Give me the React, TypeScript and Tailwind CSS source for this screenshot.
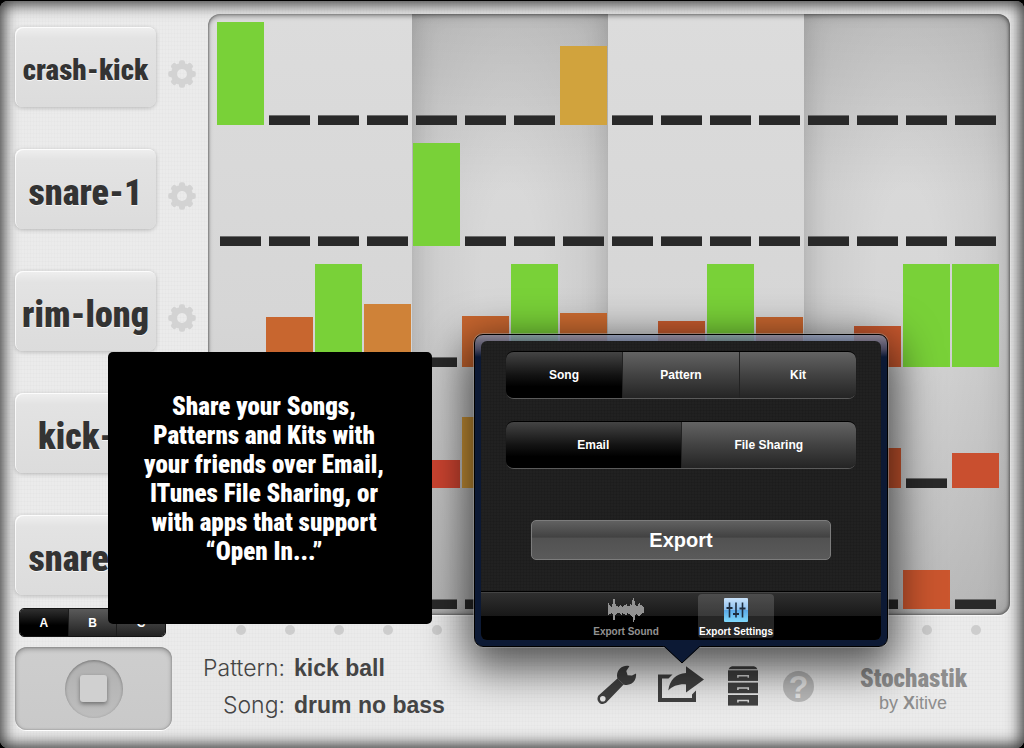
import React from "react";

type Cell = { level: number; color: string } | null;

const G = "#79d138";
const c = (level: number, color: string): Cell => ({ level, color });

const rows: Cell[][] = [
  [c(100, G), null, null, null, null, null, null, c(77, "#d1a33d"), null, null, null, null, null, null, null, null],
  [null, null, null, null, c(100, G), null, null, null, null, null, null, null, null, null, null, null],
  [null, c(49, "#c8662f"), c(100, G), c(61, "#cf8238"), null, c(50, "#c8662f"), c(100, G), c(52, "#cc6b30"), null, c(45, "#c85c2e"), c(100, G), c(49, "#c8662f"), null, c(40, "#c8582e"), c(100, G), c(100, G)],
  [null, null, null, null, c(27, "#cd4430"), c(69, "#cf9638"), null, null, null, null, null, null, null, c(39, "#c8552e"), null, c(34, "#c94f2f")],
  [null, null, null, null, null, null, null, null, null, null, null, null, null, null, c(38, "#cb562e"), null],
];

const tracks = [
  { name: "crash-kick", size: "text-[29px]" },
  { name: "snare-1", size: "text-[36px]" },
  { name: "rim-long", size: "text-[36px]" },
  { name: "kick-1", size: "text-[36px]" },
  { name: "snare-2", size: "text-[36px]" },
];

const SHADE =
  "bg-[linear-gradient(rgba(0,0,0,0.1),transparent_30%),radial-gradient(ellipse_at_50%_45%,rgba(0,0,0,0)_20%,rgba(0,0,0,0.1)_100%)] shadow-[inset_12px_0_28px_-12px_rgba(0,0,0,0.16),inset_-12px_0_28px_-12px_rgba(0,0,0,0.16)]";

const bands = [
  { start: 0, pad: "pl-[9px] pr-px", shade: "" },
  { start: 4, pad: "px-px", shade: SHADE },
  { start: 8, pad: "px-px", shade: "" },
  { start: 12, pad: "pl-px pr-[11px]", shade: SHADE },
];

const COND = "font-['Roboto_Condensed','Liberation_Sans_Narrow','Liberation_Sans',sans-serif] font-black";

function Gear() {
  return (
    <svg viewBox="-14 -14 28 28" className="h-7 w-7 fill-[#d3d3d3]">
      {[0, 45, 90, 135, 180, 225, 270, 315].map((a) => (
        <rect key={a} x="-3" y="-13.8" width="6" height="7" rx="2" transform={`rotate(${a})`} />
      ))}
      <path fillRule="evenodd" d="M0-11A11 11 0 1 1 0 11A11 11 0 1 1 0-11ZM0-5A5 5 0 1 0 0 5A5 5 0 1 0 0-5Z" />
    </svg>
  );
}

function Wrench() {
  return (
    <svg viewBox="0 0 40 40" className="h-10 w-10 fill-[#414141]">
      <path
        fillRule="evenodd"
        d="M32.4 1.2 29.3 6 30.6 10.2 35 10.6 39 8.4C39.6 13 37.6 17 34.2 18.8 31.6 20.2 28.8 20.2 26.6 19.4L10 36.8C7.8 39.4 4 39.6 2 37.4-.2 35.2 0 31.8 2.4 29.8L20.4 13.4C19.4 9.8 20.4 6 23 3.6 25.6 1 29.2.4 32.4 1.2ZM5.8 31A2.8 2.8 0 1 0 5.8 36.6 2.8 2.8 0 1 0 5.8 31Z"
      />
      <path d="M20.200 13.200 26.800 19.700" stroke="#777" strokeWidth=".6" />
    </svg>
  );
}

function Share() {
  return (
    <svg viewBox="0 0 46 38" className="h-[38px] w-[46px] fill-[#414141]">
      <path d="M0 8.5H14.5L10.5 12.4H4V32H34V28.5L38 24.6V36H0Z" />
      <path d="M28 .3 46 13.5 28 26.4V18.4C20 18 14.600 20.200 10.300 24.500 11.600 14 18 7.300 28 7Z" />
    </svg>
  );
}

function Cabinet() {
  return (
    <svg viewBox="0 0 30 40" className="h-10 w-[30px]">
      <path d="M4 .3H26Q28.500 1 29.500 3.200H.500Q1.500 1 4 .3Z" fill="#414141" />
      {[4.3, 16.6, 29].map((y) => (
        <g key={y}>
          <rect x="0" y={y} width="30" height="10.600" fill="#414141" />
          <path d={`M9.900 ${y + 7.400}V${y + 5.500}H20.300V${y + 7.400}`} fill="none" stroke="#d8d8d8" strokeWidth="1.500" />
        </g>
      ))}
    </svg>
  );
}

const WAVE: [number, number][] = [
  [5, 17], [7, 16], [8, 16], [9, 15], [6, 16], [1, 22], [1, 22], [6, 17], [8, 16], [8, 15], [9, 15], [8, 15],
  [7, 16], [8, 17], [9, 15], [8, 16], [7, 16], [7, 17], [6, 17], [8, 15], [8, 16], [8, 16], [6, 17], [7, 18],
  [2, 19], [0, 24], [3, 22], [7, 17], [8, 16], [8, 17], [6, 18], [5, 18], [7, 17], [7, 16], [8, 15], [9, 15],
];

function Wave() {
  return (
    <svg viewBox="0 0 36 24" className="h-6 w-9 fill-[#929292]">
      {WAVE.map(([top, bottom], i) => (
        <rect key={i} x={i} y={top} width="1" height={bottom - top} />
      ))}
    </svg>
  );
}

function Sliders() {
  return (
    <svg viewBox="0 0 24 24" className="h-6 w-6">
      <defs>
        <linearGradient id="blue" x1="0" y1="0" x2="0" y2="1">
          <stop offset="0" stopColor="#c9e2fa" />
          <stop offset="0.48" stopColor="#8fc2f0" />
          <stop offset="0.5" stopColor="#5aa9e8" />
          <stop offset="1" stopColor="#7fd8fb" />
        </linearGradient>
      </defs>
      <rect width="24" height="24" rx="1" fill="url(#blue)" />
      <path d="M5.500 4.500V19.500M12 4.500V19.500M18.500 4.500V19.500" stroke="#1d2b3c" strokeWidth="1.600" />
      <path d="M2.500 10H8.500M9 16H15M15.500 10.500H21.500" stroke="#1d2b3c" strokeWidth="2.200" />
    </svg>
  );
}

function Segments({ items, className }: { items: string[]; className: string }) {
  return (
    <div className={`flex h-12 overflow-hidden rounded-lg border-t border-b border-t-black border-b-[#5a5a5a] shadow-[inset_0_0_2px_#000] ${className}`}>
      {items.map((t, i) => (
        <button
          key={t}
          type="button"
          aria-pressed={i === 0}
          className={
            i === 0
              ? "flex-1 bg-[linear-gradient(#444,#131313_50%,#000_75%)] pb-px text-xs font-bold text-white"
              : "flex-1 border-l border-[#222] bg-[linear-gradient(#636363,#424242_50%,#242424)] pb-px text-xs font-bold text-white"
          }
        >
          {t}
        </button>
      ))}
    </div>
  );
}

function Popover() {
  return (
    <section
      aria-label="Export"
      className="absolute top-[333px] right-[136px] w-[414px] rounded-[9px] border border-black bg-[linear-gradient(rgba(125,135,160,0.85),rgba(60,70,100,0.9)_14px,#0c1934_22px)] p-[6px] shadow-[0_0_0_1px_rgba(160,160,160,0.5),0_14px_44px_8px_rgba(0,0,0,0.66)]"
    >
      <div className="overflow-hidden rounded-md bg-[#212121] bg-[repeating-linear-gradient(90deg,rgba(0,0,0,0.08)_0_1px,transparent_1px_3px),repeating-linear-gradient(rgba(0,0,0,0.08)_0_1px,transparent_1px_3px)]">
        <div className="px-[25px] pt-[10px]">
          <Segments items={["Song", "Pattern", "Kit"]} className="" />
          <Segments items={["Email", "File Sharing"]} className="mt-[22px]" />
          <div className="px-[25px] pt-[51px] pb-[31px]">
            <button
              type="button"
              className="h-10 w-full rounded-[5px] border border-[#7c7c7c] bg-[linear-gradient(#616161,#424242_42%,#525252_46%,#5a5a5a)] text-xl font-bold text-white"
            >
              Export
            </button>
          </div>
        </div>
        <nav className="flex h-[49px] justify-center gap-[34px] border-t border-black bg-[linear-gradient(#303030,#181818_24px,#000_24px)] pt-[2px] shadow-[inset_0_1px_0_#444]">
          <a href="#sound" className="flex h-[44px] w-[76px] flex-col items-center justify-between pt-1 text-[10px] leading-3 font-bold whitespace-nowrap text-[#929292]">
            <Wave />
            Export Sound
          </a>
          <a href="#settings" className="flex h-[44px] w-[76px] flex-col items-center justify-between rounded bg-white/15 pt-1 text-[10px] leading-3 font-bold whitespace-nowrap text-white">
            <Sliders />
            Export Settings
          </a>
        </nav>
      </div>
      <svg viewBox="0 0 38 18" className="absolute top-full left-[188px] h-[18px] w-[38px]">
        <path d="M0 0 19 17 38 0Z" fill="#0c1934" />
        <path d="M1 0 19 17 37 0" fill="none" stroke="#000" strokeWidth="1" />
      </svg>
    </section>
  );
}

export default function App() {
  return (
    <div className="min-h-screen bg-black pt-px font-['Liberation_Sans',Arial,sans-serif]">
      <main className="relative flex min-h-[747px] flex-col overflow-hidden rounded-lg bg-[#ebebeb] bg-[repeating-linear-gradient(90deg,rgba(0,0,0,0.01)_0_1px,transparent_1px_3px),repeating-linear-gradient(rgba(0,0,0,0.01)_0_1px,transparent_1px_4px)] shadow-[inset_0_0_15px_3px_rgba(0,0,0,0.8)]">
        <div className="flex pr-[14px] pl-[15px]">
          <div className="w-[193px] shrink-0 pt-[26px]">
            <div className="flex flex-col gap-[42px]">
              {tracks.map((t) => (
                <div key={t.name} className="flex items-center gap-3">
                  <button
                    type="button"
                    className={`h-20 w-[141px] rounded-lg bg-[linear-gradient(#efefef,#e3e3e3_14%,#dcdcdc)] pt-[7px] leading-none whitespace-nowrap text-[#333] shadow-[0_1px_4px_rgba(0,0,0,0.22),inset_1px_1px_0_rgba(255,255,255,0.8)] [text-shadow:0_1px_0_rgba(255,255,255,0.7)] ${t.size} ${COND}`}
                  >
                    {t.name}
                  </button>
                  <button type="button" aria-label={`${t.name} settings`} className="mt-[14px]">
                    <Gear />
                  </button>
                </div>
              ))}
            </div>
            <div className="mt-[13px] ml-1 flex h-[29px] w-[147px] overflow-hidden rounded-[5px] border border-[#151515]">
              {["A", "B", "C"].map((t, i) => (
                <button
                  key={t}
                  type="button"
                  aria-pressed={i === 0}
                  className={
                    i === 0
                      ? "flex-1 bg-[linear-gradient(#303030,#000_60%)] text-xs font-bold text-white"
                      : "flex-1 border-l border-[#1c1c1c] bg-[linear-gradient(#5a5a5a,#222)] text-xs font-bold text-white"
                  }
                >
                  {t}
                </button>
              ))}
            </div>
          </div>

          <div className="min-w-0 flex-1 pt-[13px]">
            <div className="flex overflow-hidden rounded-xl bg-[linear-gradient(#dcdcdc,#d6d6d6_50%,#c6c6c6)] shadow-[inset_0_2px_5px_rgba(0,0,0,0.4),inset_1px_0_2px_rgba(0,0,0,0.25),inset_-1px_-1px_3px_rgba(0,0,0,0.3),0_1px_1px_rgba(255,255,255,0.7)]">
              {bands.map((b) => (
                <div key={b.start} className={`flex flex-1 flex-col gap-[18px] pt-2 pb-[6px] ${b.pad} ${b.shade}`}>
                  {rows.map((r, ri) => (
                    <div key={ri} className="grid h-[103px] grid-cols-4 items-end gap-[2px]">
                      {r.slice(b.start, b.start + 4).map((cell, ci) =>
                        cell ? (
                          <div key={ci} style={{ height: `${cell.level}%`, backgroundColor: cell.color }} />
                        ) : (
                          <div key={ci} className="mx-[3px] h-[10px] border-t border-[#6c6c6c] bg-[#292929]" />
                        ),
                      )}
                    </div>
                  ))}
                </div>
              ))}
            </div>
            <div className="flex pt-[10px]">
              {bands.map((b) => (
                <div key={b.start} className={`grid flex-1 grid-cols-4 justify-items-center gap-[2px] ${b.pad}`}>
                  {[0, 1, 2, 3].map((d) => (
                    <span key={d} className="h-[10px] w-[10px] rounded-full bg-[#cdcdcd]" />
                  ))}
                </div>
              ))}
            </div>
          </div>
        </div>

        <footer className="flex items-start pt-[10px] pr-[58px] pl-[15px]">
          <button
            type="button"
            aria-label="Stop"
            className="grid h-[83px] w-[157px] shrink-0 place-items-center rounded-xl bg-[linear-gradient(#cecece,#c9c9c9)] shadow-[inset_0_2px_5px_rgba(0,0,0,0.3),inset_0_0_2px_rgba(0,0,0,0.3),0_1px_0_#fff]"
          >
            <span className="grid h-[58px] w-[58px] place-items-center rounded-full bg-[linear-gradient(#b0b0b0,#bebebe)] shadow-[inset_0_1px_3px_rgba(0,0,0,0.35)]">
              <span className="h-[27px] w-[27px] rounded-[3px] bg-[#d0d0d0] shadow-[0_2px_4px_rgba(0,0,0,0.4)]" />
            </span>
          </button>
          <dl className="ml-[30px] grid grid-cols-[83px_auto] gap-x-[9px] pt-[3px] text-[23px] leading-[37px] whitespace-nowrap text-[#444]">
            <dt className="text-right font-['Inter','Liberation_Sans',sans-serif] font-light">Pattern:</dt>
            <dd className="font-bold">kick ball</dd>
            <dt className="text-right font-['Inter','Liberation_Sans',sans-serif] font-light">Song:</dt>
            <dd className="font-bold">drum no bass</dd>
          </dl>
          <div className="ml-auto flex items-start pt-[18px]">
            <button type="button" aria-label="Tools" className="mr-[21px]"><Wrench /></button>
            <button type="button" aria-label="Share" className="mt-px mr-6"><Share /></button>
            <button type="button" aria-label="Library" className="mt-px mr-[25px]"><Cabinet /></button>
            <button type="button" aria-label="Help" className="mt-[6px] grid h-[31px] w-[31px] place-items-center rounded-full bg-[#b9b9b9] text-[32px] leading-none font-bold text-[#e6e6e6]">?</button>
            <div className="ml-[46px] w-[106px] text-center whitespace-nowrap text-[#8e8e8e]">
              <h1 className={`text-[25px] leading-7 ${COND}`}>Stochastik</h1>
              <p className="text-lg leading-5">by <b>X</b>itive</p>
            </div>
          </div>
        </footer>

        <div
          role="tooltip"
          className={`absolute top-[351px] left-[108px] h-[272px] w-[324px] rounded-[5px] bg-black pt-10 pr-3 text-center text-[25px] leading-[29px] whitespace-nowrap text-white ${COND}`}
        >
          Share your Songs,<br />
          Patterns and Kits with<br />
          your friends over Email,<br />
          ITunes File Sharing, or<br />
          with apps that support<br />
          “Open In...”
        </div>
        <Popover />
      </main>
    </div>
  );
}
